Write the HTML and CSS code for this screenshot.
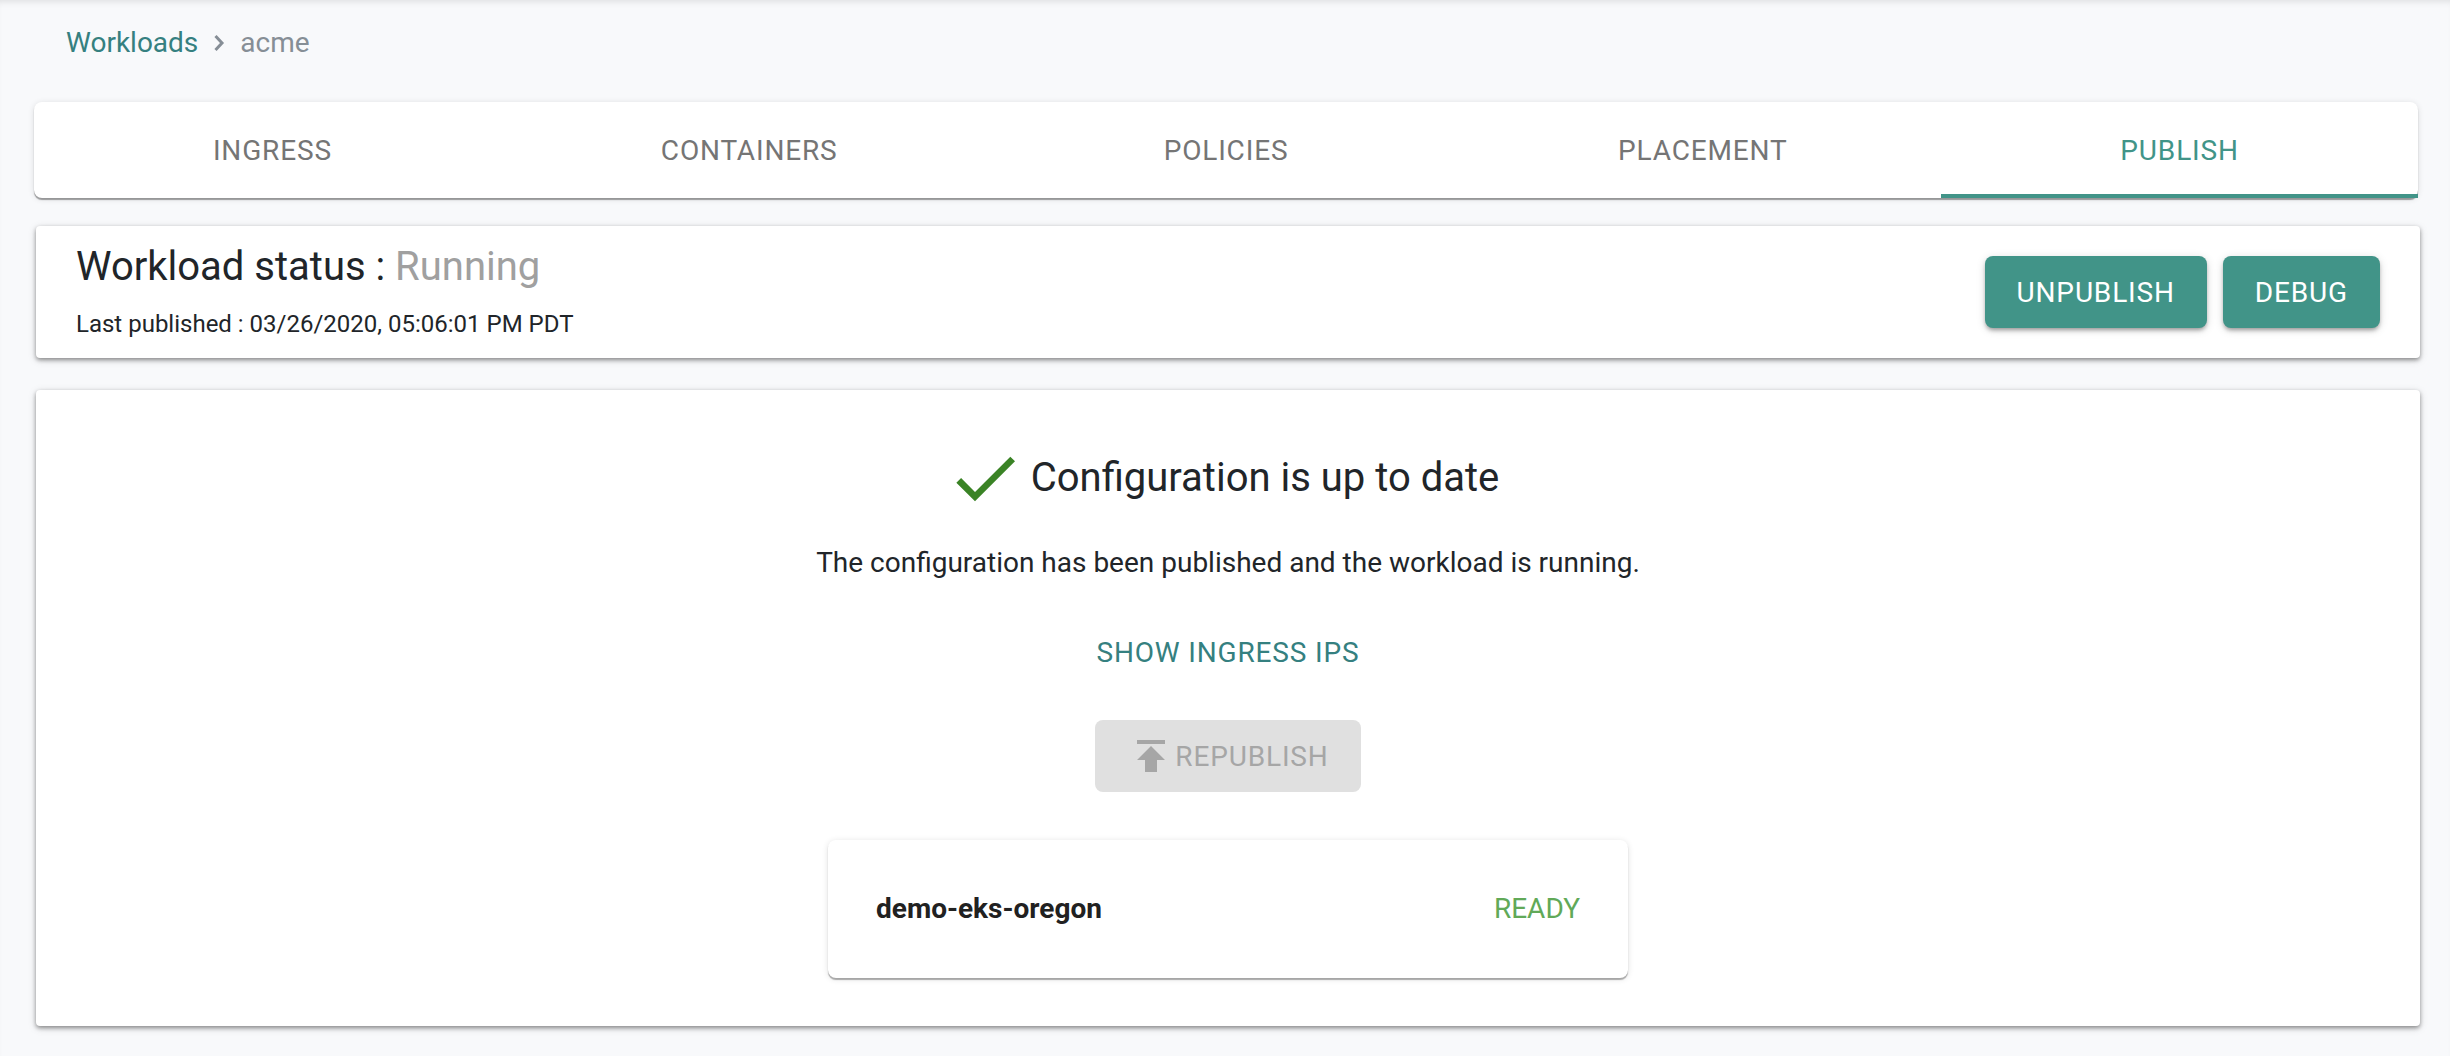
FILE: index.html
```html
<!DOCTYPE html>
<html lang="en">
<head>
    <meta charset="utf-8">
    <title>Workloads - acme</title>
    <link rel="stylesheet" href="styles.css">
</head>
<body>
    <nav class="breadcrumb">
        <a href="#workloads">Workloads</a>
        <svg class="chevron" viewBox="0 0 10 16"><path d="M1.5 1 8 8l-6.500 7"/></svg>
        <span>acme</span>
    </nav>

    <div class="tabs" role="tablist">
        <button class="tab" role="tab">Ingress</button>
        <button class="tab" role="tab">Containers</button>
        <button class="tab" role="tab">Policies</button>
        <button class="tab" role="tab">Placement</button>
        <button class="tab active" role="tab" aria-selected="true">Publish</button>
    </div>

    <section class="card status">
        <div>
            <h1>Workload status : <span class="state">Running</span></h1>
            <p class="published">Last published : 03/26/2020, 05:06:01 PM PDT</p>
        </div>
        <div class="actions">
            <button class="btn btn-primary">Unpublish</button>
            <button class="btn btn-primary">Debug</button>
        </div>
    </section>

    <main class="card config">
        <div class="config-title">
            <svg class="check" viewBox="0 0 24 24"><path d="M9 16.170L4.830 12l-1.420 1.410L9 19 21 7l-1.410-1.410z"/></svg>
            <h2>Configuration is up to date</h2>
        </div>
        <p class="message">The configuration has been published and the workload is running.</p>
        <button class="btn btn-text">Show ingress IPs</button>
        <button class="btn btn-republish" disabled>
            <svg class="upload" viewBox="0 0 24 24"><path d="M5 4v2h14V4H5zm0 10h4v6h6v-6h4l-7-7-7 7z"/></svg>
            Republish
        </button>
        <div class="cluster">
            <strong>demo-eks-oregon</strong>
            <span class="ready">READY</span>
        </div>
    </main>
</body>
</html>
```
FILE: styles.css
```css
* {
    box-sizing: border-box;
}
body {
    font-family: Roboto, sans-serif;
    font-size: 28px;
    line-height: 42px;
    color: #212529;
    background-color: #f8f9fb;
    box-shadow: inset 0 6px 6px -4px rgba(0, 0, 0, 0.1);
    margin: 0;
    padding: 22px 30px 30px 34px;
}
h1, h2, p {
    margin: 0;
}
h1, h2 {
    font-size: 40px;
    font-weight: 400;
    line-height: 50px;
}
button {
    font-family: inherit;
    font-size: 28px;
    letter-spacing: 0.03em;
    text-transform: uppercase;
    border: none;
    cursor: pointer;
}
.breadcrumb {
    display: flex;
    align-items: center;
    gap: 16px;
    padding-left: 32px;
    margin-bottom: 38px;
    color: #868e96;
}
.breadcrumb a {
    color: #358080;
    text-decoration: none;
}
.chevron {
    width: 10px;
    height: 16px;
    fill: none;
    stroke: #868e96;
    stroke-width: 3;
    overflow: visible;
}
.tabs {
    display: flex;
    height: 96px;
    margin-right: 2px;
    background: white;
    border-radius: 8px;
    box-shadow: 0 2px 1px rgba(0, 0, 0, 0.35), 0 1px 6px rgba(0, 0, 0, 0.12);
}
.tab {
    flex: 1;
    padding: 0;
    color: #757575;
    background: none;
}
.tab.active {
    color: #419488;
    box-shadow: inset 0 -4px #419488;
}
.card {
    margin-left: 2px;
    background: white;
    border-radius: 4px;
    box-shadow: 0 2px 4px rgba(0, 0, 0, 0.4), 0 2px 10px rgba(0, 0, 0, 0.12);
}
.status {
    display: flex;
    justify-content: space-between;
    align-items: center;
    margin-top: 28px;
    padding: 16px 40px;
}
.state {
    color: #a0a0a0;
}
.published {
    margin-top: 14px;
    font-size: 24px;
    line-height: 36px;
}
.actions {
    display: flex;
    gap: 16px;
}
.btn {
    display: flex;
    align-items: center;
    height: 72px;
    padding: 0 32px;
    font-weight: 400;
    border-radius: 8px;
}
.btn-primary {
    color: white;
    background-color: #419488;
    box-shadow: 0 3px 4px -1px rgba(0, 0, 0, 0.35), 0 2px 10px rgba(0, 0, 0, 0.14);
}
.config {
    display: flex;
    flex-direction: column;
    align-items: center;
    margin-top: 32px;
    padding: 48px;
}
.config-title {
    display: flex;
    align-items: center;
    gap: 6px;
    padding-right: 12px;
}
.check {
    width: 80px;
    height: 80px;
    fill: #3a8325;
}
.message {
    margin: 24px 0 32px;
}
.btn-text {
    color: #358080;
    background: none;
}
.btn-republish {
    margin: 32px 0 48px;
    color: #a6a6a6;
    background-color: #e0e0e0;
    cursor: default;
}
.upload {
    width: 48px;
    height: 48px;
    fill: #a6a6a6;
}
.cluster {
    display: flex;
    justify-content: space-between;
    width: 100%;
    max-width: 800px;
    padding: 48px;
    color: #212121;
    border-radius: 8px;
    box-shadow: 0 2px 1px rgba(0, 0, 0, 0.3), 0 1px 6px rgba(0, 0, 0, 0.12);
}
.ready {
    color: #61a958;
}
```
